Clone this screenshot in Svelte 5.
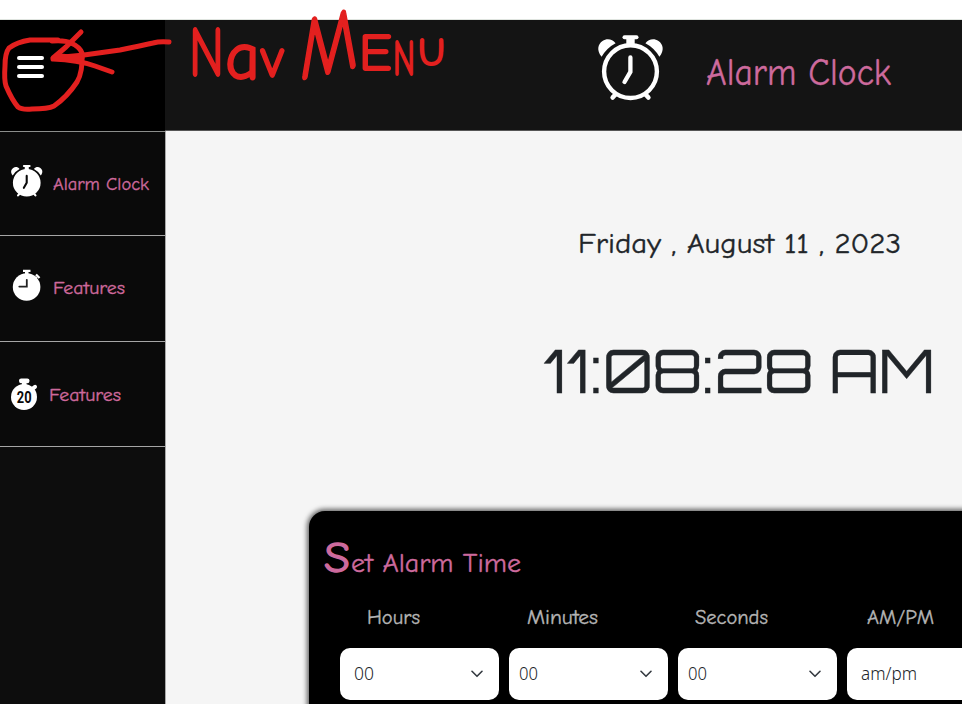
<script>
  const columns = [
    { label: 'Hours', labelX: 27, labelW: 53, value: '00', valueX: 14, valueW: 20 },
    { label: 'Minutes', labelX: 18, labelW: 71, value: '00', valueX: 10, valueW: 19 },
    { label: 'Seconds', labelX: 17, labelW: 73, value: '00', valueX: 10, valueW: 19 },
    { label: 'AM/PM', labelX: 20, labelW: 67, value: 'am/pm', valueX: 14, valueW: 56 }
  ];
  const scrawl = [
    { c: 'N', x: 189, y: 76, size: 71, w: 35 },
    { c: 'a', x: 225, y: 79, size: 68, w: 35 },
    { c: 'v', x: 261, y: 77, size: 56, w: 23 },
    { c: 'M', x: 300, y: 80, size: 88, w: 58, skew: -13 },
    { c: 'E', x: 359, y: 70, size: 52, w: 33 },
    { c: 'N', x: 393, y: 75, size: 50, w: 22 },
    { c: 'U', x: 418, y: 65, size: 38, w: 27 }
  ];
</script>

{#snippet fit(text, width, size)}
  <svg class="fit" {width} height={size}>
    <text x="0" y={size} font-size={size} textLength={width} lengthAdjust="spacingAndGlyphs">{text}</text>
  </svg>
{/snippet}

{#snippet alarm(size, solid)}
  <svg class="icon" width={size} height={size} viewBox="0 0 66 66" fill="none" stroke-linecap="round">
    <path d="M3.6 21.7C-1.6 15.5-.2 9.2 4.5 6 9 3 14.5 4.2 17.6 8.2Q8.8 12.8 3.6 21.7Z" fill="#fff" />
    <path d="M61.4 21.7C66.6 15.5 65.2 9.2 60.5 6 56 3 50.5 4.2 47.4 8.2Q56.2 12.8 61.4 21.7Z" fill="#fff" />
    <path d="M26.5 2.2H38.5" stroke="#fff" stroke-width="4" />
    <path d="M28.3 3H36.7V11H28.3Z" fill="#fff" />
    <path d="M17.4 59.4L14.6 62.6M47.6 59.4L50.4 62.6" stroke="#fff" stroke-width="4.5" />
    <circle cx="32.5" cy="36.6" r="26.4" stroke="#fff" stroke-width="4.4" fill={solid ? '#fff' : 'none'} />
    <path d="M32.4 22.5V36.8L26.5 47" stroke={solid ? '#0a0a0a' : '#fff'} stroke-width="4.3" />
  </svg>
{/snippet}

<div class="page">
  <div class="strip"></div>
  <div class="body">
    <aside>
      <div class="burger">
        <i></i><i></i><i></i>
      </div>
      <nav>
        <div class="item first">
          <div class="glyph">{@render alarm(32, true)}</div>
          <div class="caption">{@render fit('Alarm Clock', 96, 18.5)}</div>
        </div>
        <div class="item">
          <div class="glyph">
            <svg class="icon" width="32" height="32" viewBox="0 0 32 32">
              <circle cx="15.6" cy="18" r="13.8" fill="#fff" />
              <path d="M12 .8H19.5V3H17.5V6H14V3H12Z" fill="#fff" />
              <path d="M25 5.5L28.5 9M25.5 8L23.8 9.7" stroke="#fff" stroke-width="2.3" />
              <path d="M15.8 10.8V17.6H8.3" fill="none" stroke="#222" stroke-width="1.8" stroke-linecap="round" />
            </svg>
          </div>
          <div class="caption">{@render fit('Features', 72, 18.5)}</div>
        </div>
        <div class="item last">
          <div class="glyph">
            <svg class="icon" width="28" height="34" viewBox="0 0 28 34">
              <circle cx="13" cy="20" r="13" fill="#fff" />
              <rect x="8" y="1.4" width="10.5" height="4.8" rx="2.2" fill="#fff" />
              <path d="M11 4H15.5V9H11Z" fill="#fff" />
              <path d="M20.5 12.5L24 9.8" stroke="#fff" stroke-width="4" stroke-linecap="round" />
              <text x="5.8" y="25.7" font-family="Roboto, sans-serif" font-weight="700" font-size="16" textLength="14.8" lengthAdjust="spacingAndGlyphs" fill="#0a0a0a">20</text>
            </svg>
          </div>
          <div class="caption">{@render fit('Features', 72, 18.5)}</div>
        </div>
      </nav>
    </aside>
    <main>
      <header>
        {@render alarm(66, false)}
        <h1>{@render fit('Alarm Clock', 185, 38)}</h1>
      </header>
      <div class="date">{@render fit('Friday , August 11 , 2023', 323, 29)}</div>
      <div class="time">{@render fit('11:08:28 AM', 390, 59.5)}</div>
      <section>
        <h2>
          <span class="initial">{@render fit('S', 26, 43)}</span>
          {@render fit('et Alarm Time', 170, 27)}
        </h2>
        <div class="columns">
          {#each columns as c}
            <div class="column">
              <div class="label" style:padding-left="{c.labelX}px">{@render fit(c.label, c.labelW, 20)}</div>
              <div class="select" style:padding-left="{c.valueX}px">
                {@render fit(c.value, c.valueW, 18)}
                <svg class="chevron" width="12" height="8" viewBox="0 0 12 8">
                  <path d="M1 1.3L6 6.3L11 1.3" fill="none" stroke="#343a40" stroke-width="1.6" stroke-linecap="round" stroke-linejoin="round" />
                </svg>
              </div>
            </div>
          {/each}
        </div>
      </section>
    </main>
  </div>

  <svg class="marker" width="460" height="120" viewBox="0 0 460 120">
    <g fill="none" stroke="#e3201f" stroke-width="5" stroke-linecap="round" stroke-linejoin="round">
      <path d="M58 40L30 40Q17 42 9 48Q5 53 5 66Q4 80 6 86Q12 100 18 107Q22 110 32 109Q48 109 54 106Q67 97 77 82Q83 72 82 53Q80 47 71 43Q65 40 52 41" />
      <path d="M81 32L66 47L53 58L84 55L120 50Q140 46 153 43Q160 41 169 42" />
      <path d="M53 59Q78 60 95 66L112 72M60 56L82 58" />
    </g>
    {#each scrawl as s}
      <text class="scrawl" transform="translate({s.x} {s.y}) skewY({s.skew ?? 0})" font-size={s.size} textLength={s.w} lengthAdjust="spacingAndGlyphs">{s.c}</text>
    {/each}
  </svg>
</div>

<style>
  .page {
    position: relative;
    width: 962px;
    height: 704px;
    overflow: hidden;
    background: #f5f5f5;
    display: flex;
    flex-direction: column;
    font-family: 'Comic Sans MS', 'Comic Neue', 'Open Sans', sans-serif;
  }
  .strip {
    height: 19px;
    flex: none;
    background: #fff;
    border-bottom: 1px solid #dfe4df;
    box-sizing: content-box;
  }
  .body { display: flex; flex: 1; min-height: 0; }
  .fit, .icon { display: block; flex: none; overflow: visible; }
  .fit text { fill: currentColor; stroke: currentColor; stroke-width: .35px; }
  aside {
    width: 165px;
    flex: none;
    background: #0d0d0d;
    display: flex;
    flex-direction: column;
  }
  .burger {
    height: 111px;
    flex: none;
    background: #000;
    box-sizing: border-box;
    padding: 35.5px 0 0 16.5px;
    display: flex;
    flex-direction: column;
    gap: 5.4px;
  }
  .burger i { width: 27px; height: 4px; flex: none; border-radius: 2px; background: #fff; }
  nav { border-top: 1px solid #8b8d8b; color: #ce699c; }
  .item {
    height: 105.5px;
    box-sizing: border-box;
    background: #0a0a0a;
    border-bottom: 1.5px solid #a5a5a5;
    display: flex;
    padding: 33px 0 0 10.5px;
  }
  .item.first { height: 104px; }
  .glyph { width: 42px; flex: none; }
  .caption { padding-top: 6px; }
  .item.first .caption { padding-top: 5.5px; }
  .item.last { padding-top: 35px; }
  .item.last .glyph { width: 38px; }
  .item.last .caption { padding-top: 5px; }
  main { flex: 1; min-width: 0; display: flex; flex-direction: column; border-left: 1px solid #a8a8a8; }
  header {
    height: 111px;
    flex: none;
    box-sizing: border-box;
    margin-left: -1px;
    background: #141414;
    border-bottom: 1px solid #555;
    display: flex;
    padding: 15px 0 0 433px;
  }
  h1, h2 { margin: 0; font-weight: 400; color: #cd6a9d; }
  h1 { padding: 12px 0 0 42px; }
  h1 :global(text) { stroke-width: .8px; }
  .date { color: #212529; padding: 93px 0 0 412px; }
  .date :global(text) { stroke-width: .35px; }
  .time {
    color: #212529;
    padding: 79.5px 0 0 378px;
    font-family: Orbitron, Inter, 'DejaVu Sans', sans-serif;
    font-weight: 400;
    font-feature-settings: 'zero' 1;
  }
  section {
    margin: 119px 0 0 143px;
    width: 820px;
    height: 240px;
    flex: none;
    box-sizing: border-box;
    background: #000;
    border-radius: 16px;
    box-shadow: 0 0 5px 2px rgba(0, 0, 0, .6);
    padding: 18px 0 0 15px;
  }
  h2 { display: flex; align-items: flex-end; gap: 1px; height: 43px; }
  .initial :global(text) { stroke-width: 1.3px; }
  .columns { display: flex; gap: 10px; padding: 32px 0 0 16px; }
  .column { width: 159px; flex: none; }
  .label { color: #b5b5b5; height: 44px; }
  .select {
    position: relative;
    height: 52px;
    box-sizing: border-box;
    padding-top: 14px;
    background: #fff;
    border-radius: 10px;
    color: #212529;
    font-family: 'Noto Sans', 'Open Sans', sans-serif;
    font-weight: 300;
  }
  .select :global(.fit text) { stroke: none; }
  .chevron { position: absolute; right: 16px; top: 22px; }
  .marker { position: absolute; left: 0; top: 0; pointer-events: none; }
  .scrawl {
    font-family: 'Comic Sans MS', 'Comic Neue', sans-serif;
    font-weight: 400;
    fill: #e3201f;
    stroke: #e3201f;
    stroke-width: 1.8px;
    stroke-linejoin: round;
  }
</style>
